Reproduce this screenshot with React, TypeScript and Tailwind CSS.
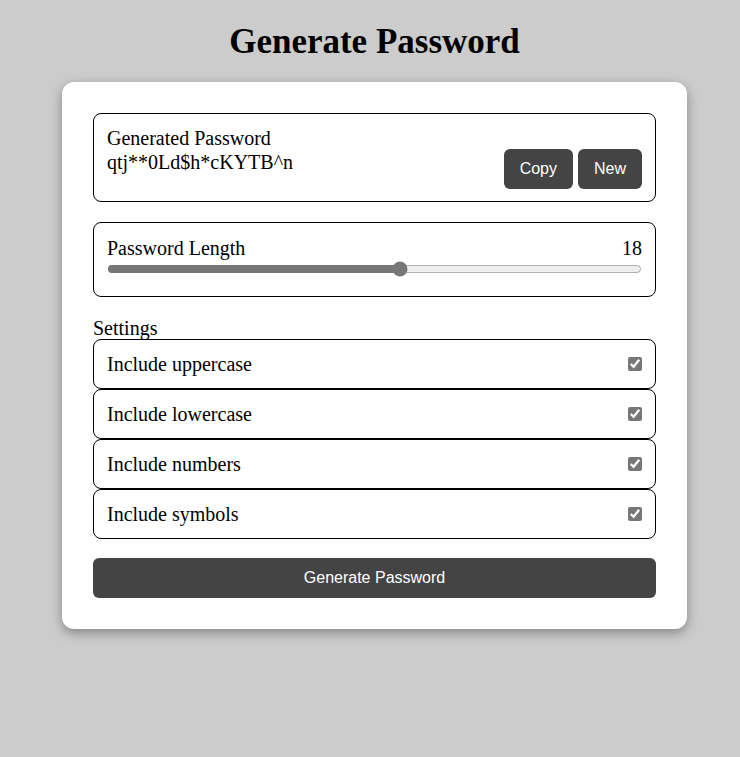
import React, { useState } from 'react';

const OPTIONS = [
  { key: 'upper', label: 'Include uppercase' },
  { key: 'lower', label: 'Include lowercase' },
  { key: 'numbers', label: 'Include numbers' },
  { key: 'symbols', label: 'Include symbols' },
];

export default function App() {
  const [password] = useState('qtj**0Ld$h*cKYTB^n');
  const [length, setLength] = useState(18);
  const [opts, setOpts] = useState<Record<string, boolean>>({
    upper: true,
    lower: true,
    numbers: true,
    symbols: true,
  });

  return (
    <div className="min-h-screen bg-[#cccccc] flex flex-col items-center pt-[22px] pl-[9px] font-['Liberation_Serif',serif] text-black">
      <h1 className="text-[35px] font-bold leading-[40px] mb-[20px]">Generate Password</h1>

      {/* card */}
      <div className="w-[625px] bg-white rounded-xl p-[31px] shadow-[0_4px_12px_rgba(0,0,0,0.35)] flex flex-col">
        <div className="border border-black rounded-lg px-[13px] py-[12px] h-[89px] flex justify-between items-end">
          <div className="self-start text-[20px] leading-[24px]">
            <div>Generated Password</div>
            <div>{password}</div>
          </div>
          <div className="flex gap-[5px] font-['Liberation_Sans',sans-serif] text-[16px]">
            <button className="h-10 px-4 bg-[#444444] text-white rounded-md">Copy</button>
            <button className="h-10 px-4 bg-[#444444] text-white rounded-md">New</button>
          </div>
        </div>

        <div className="mt-5 border border-black rounded-lg px-[13px] pt-[13px] pb-[19px] text-[20px] leading-[24px]">
          <div className="flex justify-between">
            <span>Password Length</span>
            <span>{length}</span>
          </div>
          <input
            type="range"
            min={1}
            max={32}
            value={length}
            onChange={(e) => setLength(Number(e.target.value))}
            className="w-full block mt-[1px] accent-[#777777]"
          />
        </div>

        <div className="mt-5 text-[20px] leading-[22px]">Settings</div>
        <div className="flex flex-col">
          {OPTIONS.map((o) => (
            <label
              key={o.key}
              className="h-[50px] border border-black rounded-lg px-[13px] flex items-center justify-between text-[20px]"
            >
              <span>{o.label}</span>
              <input
                type="checkbox"
                checked={opts[o.key]}
                onChange={() => setOpts({ ...opts, [o.key]: !opts[o.key] })}
                className="w-[14px] h-[14px] accent-[#777777]"
              />
            </label>
          ))}
        </div>

        <button className="mt-[19px] h-10 w-full bg-[#444444] text-white rounded-md font-['Liberation_Sans',sans-serif] text-[16px]">
          Generate Password
        </button>
      </div>
    </div>
  );
}
